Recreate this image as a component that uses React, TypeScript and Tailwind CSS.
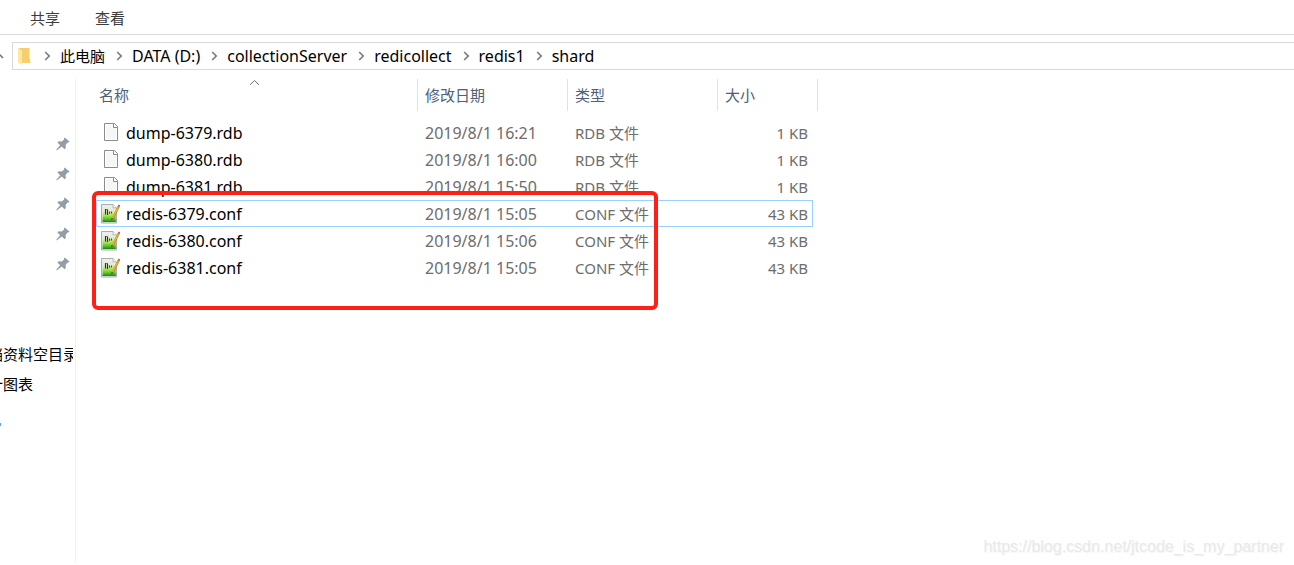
import type { ReactNode } from "react";

type FileRow = {
  name: string;
  date: string;
  type: string;
  size: string;
  conf?: boolean;
  focused?: boolean;
};

const TABS = ["共享", "查看"];

const CRUMBS = ["此电脑", "DATA (D:)", "collectionServer", "redicollect", "redis1", "shard"];

const FILES: FileRow[] = [
  { name: "dump-6379.rdb", date: "2019/8/1 16:21", type: "RDB 文件", size: "1 KB" },
  { name: "dump-6380.rdb", date: "2019/8/1 16:00", type: "RDB 文件", size: "1 KB" },
  { name: "dump-6381.rdb", date: "2019/8/1 15:50", type: "RDB 文件", size: "1 KB" },
  { name: "redis-6379.conf", date: "2019/8/1 15:05", type: "CONF 文件", size: "43 KB", conf: true, focused: true },
  { name: "redis-6380.conf", date: "2019/8/1 15:06", type: "CONF 文件", size: "43 KB", conf: true },
  { name: "redis-6381.conf", date: "2019/8/1 15:05", type: "CONF 文件", size: "43 KB", conf: true },
];

const PINS = [0, 1, 2, 3, 4];

function FolderIcon() {
  return (
    <svg width="14" height="18" viewBox="0 0 14 18" aria-hidden="true">
      <path d="M1 1h10.5v10.5l.8.8V16H1z" fill="#f6cf6c" />
      <path d="M0 1l4 2.2V18L0 15.6z" fill="#ffe79c" />
    </svg>
  );
}

function CrumbArrow() {
  return (
    <svg width="7" height="10" viewBox="0 0 7 10" fill="none" aria-hidden="true">
      <path d="M1.2 1l4 4-4 4" stroke="#7c7c7c" strokeWidth="1.7" />
    </svg>
  );
}

function PinIcon() {
  return (
    <svg width="14" height="14" viewBox="0 0 14 14" fill="#929da5" aria-hidden="true">
      <path d="M8.8.4l4.8 4.3-1.4.9-.6-.1-2 2.5.2 3.1-1.2 1.2-2.8-2.7L1 13.2H.4v-.6l3.8-4.3L1.4 5.5l1.2-1.2 3.2.2 2.3-2-.1-.9z" />
    </svg>
  );
}

function BlankFileIcon() {
  return (
    <svg width="20" height="20" viewBox="0 0 20 20" aria-hidden="true">
      <path d="M3.5.5h10l3 3v14h-13z" fill="#f5f7f7" stroke="#8b8b8b" />
      <path d="M4.5 1.5h8v3h3v12h-11z" fill="none" stroke="#fff" />
      <path d="M12.5.5v4h4" fill="#fff" stroke="#8b8b8b" />
    </svg>
  );
}

function ConfFileIcon() {
  return (
    <svg width="20" height="20" viewBox="0 0 20 20" aria-hidden="true">
      <defs>
        <linearGradient id="conf-green" x1="0" y1="0" x2="0" y2="1">
          <stop offset="0" stopColor="#e9eeea" />
          <stop offset=".3" stopColor="#e0ebcf" />
          <stop offset=".6" stopColor="#a5e04e" />
          <stop offset=".8" stopColor="#5cc425" />
          <stop offset="1" stopColor="#16851a" />
        </linearGradient>
      </defs>
      <path d="M.5.5h11.5l3.5 3.5v15H.5z" fill="#eceeee" stroke="#a9adad" />
      <path d="M1.5 2.5h13.3V18H1.5z" fill="url(#conf-green)" />
      <path d="M12 .5v3.3h3" fill="#fff" stroke="#a4a8a8" strokeWidth=".8" />
      <path d="M4.5 5v5.5M6.5 5.5v5.5" stroke="#26332b" strokeWidth="1.1" />
      <path d="M4.5 5.5h2" stroke="#4d584f" strokeWidth=".8" />
      <path d="M8.5 7.5v2.3M10.5 7.5v2" stroke="#3b5141" strokeWidth="1.1" />
      <path d="M17.6 2.5l-5.8 12" stroke="#b98025" strokeWidth="2.2" />
      <path d="M17.4 2.5L11.6 14.3" stroke="#f0b323" strokeWidth="1.4" />
      <path d="M16.6 2.3L17.6.4l1.6.8-.7 2z" fill="#b9605c" />
      <path d="M10.6 14l-.3 2.2 2-1.4z" fill="#46412b" />
    </svg>
  );
}

function HeaderCell({ children, className, colSpan }: { children: ReactNode; className?: string; colSpan?: number }) {
  return (
    <th scope="col" colSpan={colSpan} className={`h-8 border-r border-[#e2e2e2] p-0 text-left font-normal ${className ?? ""}`}>
      {children}
    </th>
  );
}

export default function App() {
  return (
    <div className="relative flex min-h-screen flex-col overflow-hidden bg-white pb-0.5 font-['Noto_Sans','Noto_Sans_CJK_SC',sans-serif] text-[15px] leading-5 text-black">
      <nav className="flex h-[35px] items-center gap-[35px] border-b border-[#dadada] pt-0.5 pl-[30px] text-[#3c3c3c]">
        {TABS.map((tab) => (
          <button key={tab} type="button">
            {tab}
          </button>
        ))}
      </nav>

      <div className="mt-[7px] flex h-7 items-center">
        <div className="flex w-3 shrink-0 justify-start">
          <svg width="4" height="8" viewBox="0 0 4 8" fill="none" aria-hidden="true">
            <path d="M-2 5L0 3l3 3" stroke="#6f6f6f" strokeWidth="1.5" />
          </svg>
        </div>
        <div className="flex h-full flex-1 items-center border-y border-l border-[#d9d9d9] pl-[5px]">
          <FolderIcon />
          <ol className="flex items-center pl-3">
            {CRUMBS.map((crumb) => (
              <li key={crumb} className="flex items-center gap-[9px] pr-[11px] text-base leading-5 first:text-[15px]">
                <CrumbArrow />
                <a href="#">{crumb}</a>
              </li>
            ))}
          </ol>
        </div>
      </div>

      <div className="mt-[9px] flex flex-1">
        <aside className="w-[76px] shrink-0 border-r border-[#f0f0f0] pr-0.5">
          <ul className="pt-[50px]">
            {PINS.map((pin) => (
              <li key={pin} className="flex h-[30px] items-center justify-end pr-[3px]">
                <PinIcon />
              </li>
            ))}
          </ul>
          <div className="overflow-hidden pt-[60px] whitespace-nowrap">
            <a href="#" className="-ml-3 block h-[30px] leading-[30px]">
              档资料空目录
            </a>
            <a href="#" className="-ml-3 block h-[30px] leading-[30px]">
              计图表
            </a>
          </div>
          <div className="mt-6 h-[3px] w-px bg-[#3fb2e8]" />
        </aside>

        <main className="relative flex-1 pl-5">
          <table className="w-[722px] table-fixed border-separate border-spacing-0">
            <colgroup>
              <col className="w-[322px]" />
              <col className="w-[150px]" />
              <col className="w-[150px]" />
              <col className="w-[95px]" />
              <col className="w-[5px]" />
            </colgroup>
            <thead className="text-[#4c607a]">
              <tr>
                <HeaderCell className="relative pl-[3px]">
                  名称
                  <svg className="absolute top-0 left-[153px]" width="11" height="7" viewBox="0 0 11 7" fill="none" aria-hidden="true">
                    <path d="M1 5.8l4.5-4.3L10 5.8" stroke="#6b6b6b" />
                  </svg>
                </HeaderCell>
                <HeaderCell className="pl-[7px]">修改日期</HeaderCell>
                <HeaderCell className="pl-[7px]">类型</HeaderCell>
                <HeaderCell className="pl-[7px]" colSpan={2}>
                  大小
                </HeaderCell>
              </tr>
            </thead>
            <tbody className="text-[#6d6d6d]">
              <tr>
                <td colSpan={5} className="h-2 p-0" />
              </tr>
              {FILES.map((file) => {
                const line = file.focused ? "border-[#99d1ff]" : "border-transparent";
                return (
                  <tr key={file.name} className="h-[27px]">
                    <td className={`border-y border-l p-0 ${line}`}>
                      <div className="flex items-center gap-[5px] pl-1 text-base leading-5 text-black">
                        {file.conf ? <ConfFileIcon /> : <BlankFileIcon />}
                        <span>{file.name}</span>
                      </div>
                    </td>
                    <td className={`border-y p-0 pl-[7px] text-base leading-5 ${line}`}>{file.date}</td>
                    <td className={`border-y p-0 pl-[7px] ${line}`}>{file.type}</td>
                    <td className={`border-y border-r p-0 pr-1 text-right ${line}`}>{file.size}</td>
                    <td className="p-0" />
                  </tr>
                );
              })}
            </tbody>
          </table>

          {/* highlight around the conf files */}
          <div className="pointer-events-none absolute top-28 left-4 h-[119px] w-[566px] rounded-md border-4 border-[#ff2015]" />
        </main>
      </div>

      <p className="absolute right-2.5 bottom-2 font-['Liberation_Sans',sans-serif] text-base leading-5 text-[#e9e9e9] [text-shadow:1px_1px_0_#f6f6f6]">
        https://blog.csdn.net/jtcode_is_my_partner
      </p>
    </div>
  );
}
